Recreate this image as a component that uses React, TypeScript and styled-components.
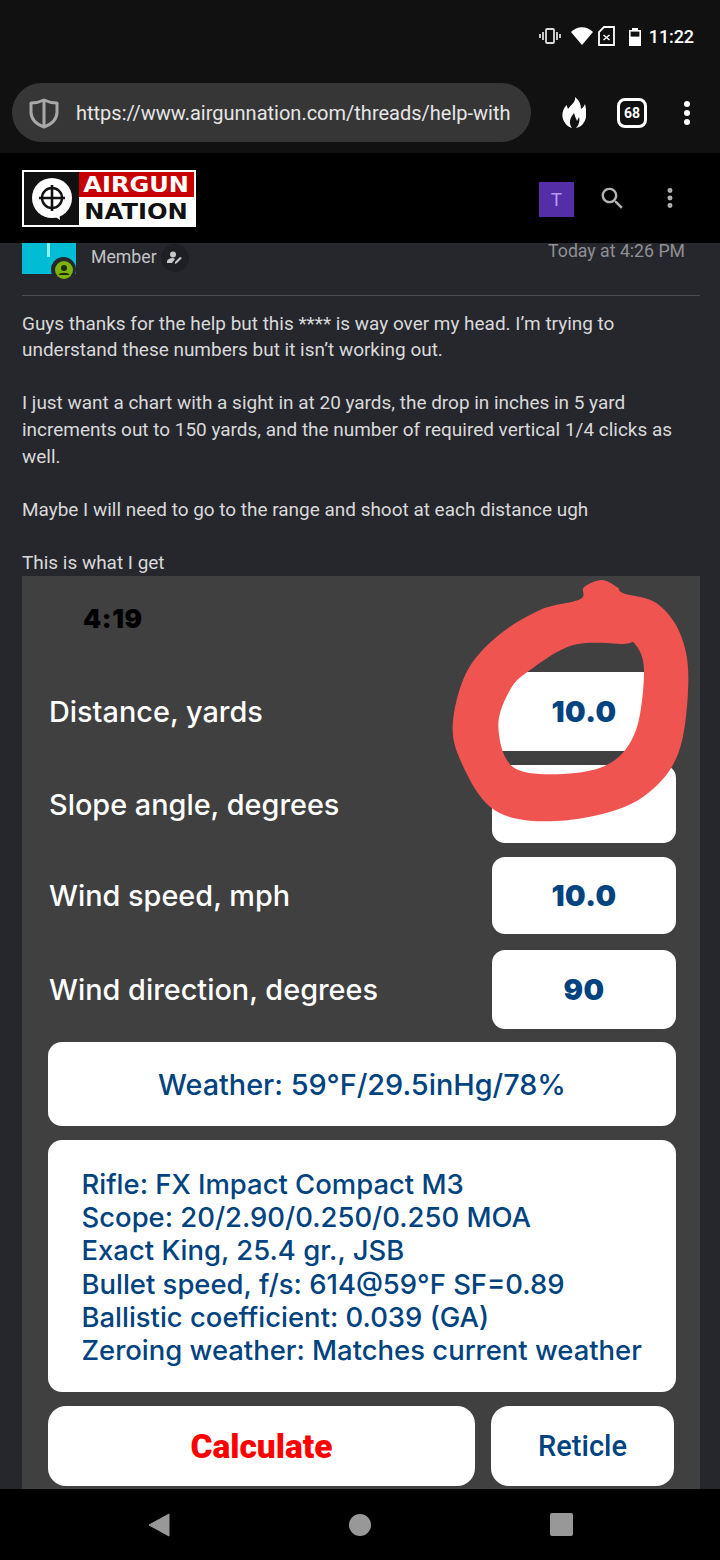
import styled, { createGlobalStyle } from "styled-components";
import { MoreVertical } from "lucide-react";

const GlobalStyle = createGlobalStyle`
  html, body {
    margin: 0;
    padding: 0;
    background: #000;
    font-family: Roboto, "Liberation Sans", sans-serif;
  }
  * {
    box-sizing: border-box;
  }
`;

const Phone = styled.div`
  width: 720px;
  height: 1560px;
  display: flex;
  flex-direction: column;
  overflow: hidden;
  background: #26272c;
`;

const StatusBar = styled.div`
  height: 70px;
  flex: none;
  background: #111112;
  display: flex;
  justify-content: flex-end;
  align-items: center;
  padding: 2px 26px 0 0;
  color: #fff;
`;
const StatusIcons = styled.div`
  display: flex;
  align-items: center;
`;
const Clock = styled.span`
  font-size: 18px;
  font-weight: 500;
  margin-left: 8px;
  letter-spacing: -0.1px;
`;

const BrowserBar = styled.div`
  height: 83px;
  flex: none;
  background: #111112;
  display: flex;
  align-items: flex-start;
  padding: 13px 0 0 12px;
`;
const UrlPill = styled.div`
  width: 519px;
  height: 59px;
  border-radius: 30px;
  background: #363636;
  display: flex;
  align-items: center;
  padding-left: 16px;
  gap: 16px;
`;
const UrlText = styled.span`
  color: #e6e6e6;
  font-size: 20px;
  white-space: nowrap;
  overflow: hidden;
`;
const BrowserActions = styled.div`
  flex: 1;
  display: flex;
  align-items: center;
  height: 59px;
  padding-left: 31px;
`;
const TabCount = styled.div`
  width: 30px;
  height: 30px;
  margin-left: 31px;
  border: 3px solid #fff;
  border-radius: 8px;
  color: #fff;
  font-size: 14px;
  font-weight: 700;
  display: flex;
  align-items: center;
  justify-content: center;
`;
const MenuDots = styled.div`
  margin-left: 37px;
  display: flex;
  flex-direction: column;
  gap: 3px;
`;
const MenuDot = styled.span`
  width: 6px;
  height: 6px;
  border-radius: 50%;
  background: #fff;
`;

const SiteHeader = styled.header`
  height: 90px;
  flex: none;
  background: #000;
  display: flex;
  align-items: flex-start;
  padding: 17px 0 0 22px;
`;
const Logo = styled.div`
  width: 174px;
  height: 57px;
  background: #fff;
  padding: 2px;
  display: flex;
`;
const LogoMark = styled.div`
  width: 55px;
  background: #111;
  display: flex;
  align-items: center;
  justify-content: center;
  flex: none;
`;
const LogoWords = styled.div`
  flex: 1;
  display: flex;
  flex-direction: column;
`;
const LogoRed = styled.div`
  height: 26px;
  background: #c80000;
  color: #fff;
  font: 700 21.5px/25px "DejaVu Sans", sans-serif;
  text-align: center;
  white-space: nowrap;
`;
const LogoBlack = styled.div`
  flex: 1;
  color: #111;
  font: 700 22px/29px "DejaVu Sans", sans-serif;
  text-align: center;
  white-space: nowrap;
`;
const LogoWord = styled.span<{ $stretch: number }>`
  display: inline-block;
  transform: scaleX(${(p) => p.$stretch});
`;
const HeaderTools = styled.div`
  margin-left: auto;
  display: flex;
  align-items: flex-start;
  padding-top: 12px;
  color: #b4b4b4;
`;
const UserTile = styled.div`
  width: 35px;
  height: 35px;
  background: #542ea6;
  color: #b79af0;
  font-size: 19px;
  display: flex;
  align-items: center;
  justify-content: center;
`;
const SearchSlot = styled.div`
  margin-left: 24px;
  height: 32px;
  display: flex;
  align-items: center;
`;
const KebabSlot = styled.div`
  margin: 0 37px 0 30px;
  height: 32px;
  display: flex;
  align-items: center;
`;

const Post = styled.main`
  flex: 1;
  min-height: 0;
  overflow: hidden;
  padding: 0 20px 0 22px;
  position: relative;
`;
const AuthorRow = styled.div`
  height: 53px;
  display: flex;
  align-items: flex-start;
  border-bottom: 1px solid #4c4d52;
`;
const Avatar = styled.div`
  width: 54px;
  height: 31px;
  background: #00bcd4;
  position: relative;
  flex: none;
`;
const AvatarStem = styled.span`
  position: absolute;
  left: 25px;
  top: 0;
  width: 3px;
  height: 14px;
  background: #8ff1f5;
`;
const OnlineBadge = styled.div`
  position: absolute;
  left: 29px;
  top: 14px;
  width: 25px;
  height: 25px;
  border-radius: 50%;
  background: #26272c;
  display: flex;
  align-items: center;
  justify-content: center;
`;
const Role = styled.span`
  margin-left: 15px;
  margin-top: 3px;
  color: #c4c4c6;
  font-size: 17.7px;
  line-height: 22px;
`;
const RoleIcon = styled.span`
  width: 28px;
  height: 28px;
  margin: 1px 0 0 4px;
  border-radius: 50%;
  background: #1e1f23;
  display: flex;
  align-items: center;
  justify-content: center;
`;
const PostTime = styled.span`
  margin-left: auto;
  margin-right: 15px;
  color: #8f9094;
  font-size: 17.7px;
  line-height: 20px;
  margin-top: -2px;
`;
const Body = styled.div`
  padding-top: 14.6px;
  color: #d9d9da;
  font-size: 18.97px;
  line-height: 26.6px;
  height: 280px;
`;
const Shot = styled.div`
  width: 678px;
  height: 920px;
  background: #404040;
  position: relative;
  padding: 0 24px 0 26px;
`;
const ShotClock = styled.div`
  height: 96px;
  padding: 27px 0 0 35px;
  color: #000;
  font: 900 26px/32px Inter, sans-serif;
  letter-spacing: 0.6px;
`;
const Row = styled.div<{ $h: number; $gap: number }>`
  height: ${(p) => p.$h}px;
  margin-bottom: ${(p) => p.$gap}px;
  display: flex;
  align-items: center;
  justify-content: space-between;
`;
const Label = styled.span`
  color: #fff;
  font: 500 28.85px Inter, sans-serif;
  padding-left: 1px;
`;
const Field = styled.div<{ $sharp?: boolean }>`
  width: 184px;
  height: 100%;
  background: #fff;
  border-radius: ${(p) => (p.$sharp ? 0 : 13)}px;
  color: #00437f;
  font: 900 29px Inter, sans-serif;
  letter-spacing: 0.4px;
  display: flex;
  align-items: center;
  justify-content: center;
`;
const WeatherCard = styled.div`
  height: 84px;
  margin-bottom: 14px;
  background: #fff;
  border-radius: 14px;
  color: #00437f;
  font: 500 28.8px Inter, sans-serif;
  display: flex;
  align-items: center;
  justify-content: center;
`;
const RifleCard = styled.div`
  height: 252px;
  margin-bottom: 14px;
  background: #fff;
  border-radius: 14px;
  color: #00437f;
  font: 500 27.45px/33.2px Inter, sans-serif;
  padding: 28px 0 0 33.5px;
  white-space: nowrap;
`;
const ActionRow = styled.div`
  display: flex;
  gap: 16px;
  height: 80px;
`;
const ActionButton = styled.div<{ $primary?: boolean }>`
  width: ${(p) => (p.$primary ? 427 : 183)}px;
  background: #fff;
  border-radius: 18px;
  color: ${(p) => (p.$primary ? "#ff0000" : "#00437f")};
  font-size: ${(p) => (p.$primary ? 33.5 : 29)}px;
  font-weight: ${(p) => (p.$primary ? 900 : 500)};
  display: flex;
  align-items: center;
  justify-content: center;
`;
const Scribble = styled.svg`
  position: absolute;
  left: 408px;
  top: -6px;
  width: 290px;
  height: 290px;
`;

const NavBar = styled.nav`
  height: 71px;
  flex: none;
  background: #000;
  display: flex;
  align-items: center;
  justify-content: center;
`;
const NavSlot = styled.div`
  width: 201px;
  display: flex;
  justify-content: center;
`;

type Pt = [number, number];

const outerRing: Pt[] = [
  [68, 470], [108, 310], [200, 200], [330, 120], [450, 88], [462, 52], [515, 30], [562, 52],
  [580, 70], [680, 100], [750, 190], [775, 330], [745, 550], [640, 680], [480, 740], [300, 752], [180, 710], [100, 590],
];
const innerRing: Pt[] = [
  [300, 300], [430, 225], [580, 222], [615, 222], [642, 300], [618, 480], [540, 580], [400, 612], [250, 592], [205, 470], [240, 360],
];

// closed Catmull-Rom outline through a point list
const smooth = (pts: Pt[]) => {
  const n = pts.length;
  let d = `M${pts[0][0]} ${pts[0][1]}`;
  for (let i = 0; i < n; i++) {
    const p0 = pts[(i + n - 1) % n];
    const p1 = pts[i];
    const p2 = pts[(i + 1) % n];
    const p3 = pts[(i + 2) % n];
    const c1 = [p1[0] + (p2[0] - p0[0]) / 6, p1[1] + (p2[1] - p0[1]) / 6];
    const c2 = [p2[0] - (p3[0] - p1[0]) / 6, p2[1] - (p3[1] - p1[1]) / 6];
    d += ` C${c1[0]} ${c1[1]} ${c2[0]} ${c2[1]} ${p2[0]} ${p2[1]}`;
  }
  return d + "Z";
};

const Flame = () => (
  <svg width="24" height="31" viewBox="0 0 24 31">
    <path
      fill="#fff"
      d="M13 0C14 5 9 8 6 12C5.500 10.500 5 9.500 4.500 8C1 12 0 16 .5 20C1.500 26 6 30 10 31C7 27 7 22 12 16C13 20 14 21 15 24C16 22 16.500 21 17 20C18 24 17 28 14 31C19 30 23 26 24 20C24.500 15 24 11 23 7C22 9 21 11 19 12C19 7 17 3 13 0Z"
    />
  </svg>
);

const Shield = () => (
  <svg width="32" height="32" viewBox="0 0 32 32" fill="none">
    <path
      d="M16 3c4 2 8 3 13 3v9c0 7-5 12-13 15C8 27 3 22 3 15V6c5 0 9-1 13-3z"
      stroke="#a8a8a8"
      strokeWidth="3"
      strokeLinejoin="round"
    />
    <path d="M16 3v27" stroke="#a8a8a8" strokeWidth="3" />
  </svg>
);

const SearchGlyph = () => (
  <svg width="29" height="29" viewBox="0 0 24 24" fill="currentColor">
    <path d="M15.5 14h-.79l-.28-.27C15.41 12.59 16 11.11 16 9.5 16 5.91 13.09 3 9.5 3S3 5.91 3 9.5 5.91 16 9.5 16c1.61 0 3.09-.59 4.23-1.57l.27.28v.79l5 4.99L20.49 19l-4.99-5zm-6 0C7.01 14 5 11.99 5 9.5S7.01 5 9.5 5 14 7.01 14 9.5 11.99 14 9.5 14z" />
  </svg>
);

export default function App(): JSX.Element {
  return (
    <Phone>
      <GlobalStyle />
      <StatusBar>
        <StatusIcons>
          <svg width="22" height="16" viewBox="0 0 22 16" fill="none" stroke="#ddd" strokeWidth="1.8">
            <rect x="7" y="1" width="8" height="14" rx="1" />
            <path d="M4 4v8M18 4v8M1 6v4M21 6v4" />
          </svg>
          <svg width="22" height="18" viewBox="0 0 22 18" style={{ marginLeft: 10 }}>
            <path fill="#fff" d="M11 18L0 5c6-6.500 16-6.500 22 0z" />
          </svg>
          <svg width="17" height="20" viewBox="0 0 17 20" fill="none" stroke="#fff" strokeWidth="1.8" style={{ marginLeft: 5 }}>
            <path d="M6 1h10v18H1V6z" />
            <path d="M5.500 9l6 5M11.500 9l-6 5" strokeWidth="1.500" />
          </svg>
          <svg width="12" height="19" viewBox="0 0 12 19" style={{ marginLeft: 14 }}>
            <path fill="#fff" d="M3 3V1h6v2h3v16H0V3z" />
            <rect x="1.600" y="4.600" width="8.800" height="5" fill="#111" />
          </svg>
          <Clock>11:22</Clock>
        </StatusIcons>
      </StatusBar>
      <BrowserBar>
        <UrlPill>
          <Shield />
          <UrlText>https://www.airgunnation.com/threads/help-with</UrlText>
        </UrlPill>
        <BrowserActions>
          <Flame />
          <TabCount>68</TabCount>
          <MenuDots>
            <MenuDot />
            <MenuDot />
            <MenuDot />
          </MenuDots>
        </BrowserActions>
      </BrowserBar>
      <SiteHeader>
        <Logo>
          <LogoMark>
            <svg width="42" height="44" viewBox="0 0 42 44" fill="none">
              <circle cx="21" cy="21" r="20" fill="#fff" />
              <path d="M19 36l10 7-1-9z" fill="#fff" />
              <circle cx="21" cy="21" r="10" stroke="#111" strokeWidth="2.400" />
              <path d="M21 8v26M8 21h26" stroke="#111" strokeWidth="2.600" />
            </svg>
          </LogoMark>
          <LogoWords>
            <LogoRed>
              <LogoWord $stretch={1.12}>AIRGUN</LogoWord>
            </LogoRed>
            <LogoBlack>
              <LogoWord $stretch={1.1}>NATION</LogoWord>
            </LogoBlack>
          </LogoWords>
        </Logo>
        <HeaderTools>
          <UserTile>T</UserTile>
          <SearchSlot>
            <SearchGlyph />
          </SearchSlot>
          <KebabSlot>
            <MoreVertical size={26} strokeWidth={2.6} />
          </KebabSlot>
        </HeaderTools>
      </SiteHeader>
      <Post>
        <AuthorRow>
          <Avatar>
            <AvatarStem />
            <OnlineBadge>
              <svg width="18" height="18" viewBox="0 0 18 18">
                <circle cx="9" cy="9" r="9" fill="#7cb305" />
                <circle cx="9" cy="7" r="3" fill="#1e2a08" />
                <path d="M3.500 14c1-3 10-3 11 0z" fill="#1e2a08" />
              </svg>
            </OnlineBadge>
          </Avatar>
          <Role>Member</Role>
          <RoleIcon>
            <svg width="15" height="14" viewBox="0 0 15 14" fill="#c8c8c8">
              <circle cx="6" cy="3.500" r="3" />
              <path d="M0 11c0-3 3-4 6-4l2 1-3 4H0z" />
              <path d="M8 11l5-5 2 1-5 5-2 1z" />
            </svg>
          </RoleIcon>
          <PostTime>Today at 4:26 PM</PostTime>
        </AuthorRow>
        <Body>
          Guys thanks for the help but this **** is way over my head. I’m trying to
          <br />
          understand these numbers but it isn’t working out.
          <br />
          <br />
          I just want a chart with a sight in at 20 yards, the drop in inches in 5 yard
          <br />
          increments out to 150 yards, and the number of required vertical 1/4 clicks as
          <br />
          well.
          <br />
          <br />
          Maybe I will need to go to the range and shoot at each distance ugh
          <br />
          <br />
          This is what I get
        </Body>
        <Shot>
          <ShotClock>4:19</ShotClock>
          <Row $h={79} $gap={14}>
            <Label>Distance, yards</Label>
            <Field $sharp>10.0</Field>
          </Row>
          <Row $h={78} $gap={14}>
            <Label>Slope angle, degrees</Label>
            <Field />
          </Row>
          <Row $h={77} $gap={16}>
            <Label>Wind speed, mph</Label>
            <Field>10.0</Field>
          </Row>
          <Row $h={79} $gap={13}>
            <Label>Wind direction, degrees</Label>
            <Field>90</Field>
          </Row>
          <WeatherCard>Weather: 59°F/29.5inHg/78%</WeatherCard>
          <RifleCard>
            Rifle: FX Impact Compact M3
            <br />
            Scope: 20/2.90/0.250/0.250 MOA
            <br />
            Exact King, 25.4 gr., JSB
            <br />
            Bullet speed, f/s: 614@59°F SF=0.89
            <br />
            Ballistic coefficient: 0.039 (GA)
            <br />
            Zeroing weather: Matches current weather
          </RifleCard>
          <ActionRow>
            <ActionButton $primary>Calculate</ActionButton>
            <ActionButton>Reticle</ActionButton>
          </ActionRow>
          <Scribble viewBox="0 0 870 870">
            <path fill="#f05451" fillRule="evenodd" d={smooth(outerRing) + smooth(innerRing)} />
          </Scribble>
        </Shot>
      </Post>
      <NavBar>
        <NavSlot>
          <svg width="22" height="24" viewBox="0 0 22 24">
            <path fill="#989898" d="M21 1v22L1 12z" stroke="#989898" strokeLinejoin="round" />
          </svg>
        </NavSlot>
        <NavSlot>
          <svg width="22" height="22" viewBox="0 0 22 22">
            <circle cx="11" cy="11" r="11" fill="#989898" />
          </svg>
        </NavSlot>
        <NavSlot>
          <svg width="23" height="23" viewBox="0 0 23 23">
            <rect width="23" height="23" rx="2" fill="#989898" />
          </svg>
        </NavSlot>
      </NavBar>
    </Phone>
  );
}
